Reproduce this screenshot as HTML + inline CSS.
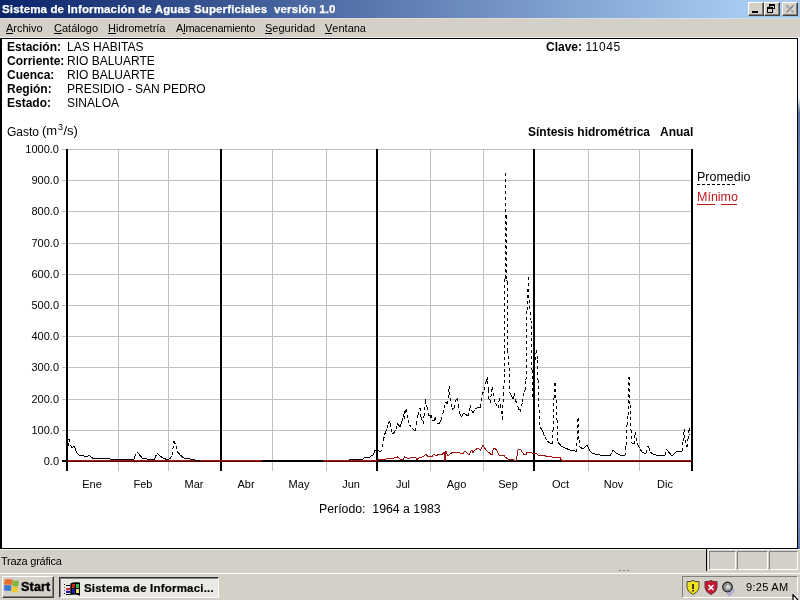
<!DOCTYPE html>
<html><head><meta charset="utf-8">
<style>
*{margin:0;padding:0;box-sizing:border-box}
html{width:800px;height:600px;overflow:hidden;background:#D4D0C8}body{will-change:transform;position:relative;width:800px;height:600px;overflow:hidden;background:#D4D0C8;font-family:"Liberation Sans",sans-serif;font-size:11px;color:#000}
.a{position:absolute;white-space:nowrap}
#title{position:absolute;left:0;top:0;width:800px;height:18px;background:linear-gradient(to right,#0A246A 0px,#A6CAF0 740px,#A6CAF0 800px)}
#title .t{position:absolute;left:2px;top:2px;color:#fff;font-weight:bold;font-size:11.5px;line-height:14px;letter-spacing:0.14px;-webkit-text-stroke:0.25px #fff}
.tb{position:absolute;top:2px;width:16px;height:14px;background:#D4D0C8;border-top:1px solid #fff;border-left:1px solid #fff;border-right:1px solid #404040;border-bottom:1px solid #404040;box-shadow:inset -1px -1px 0 #808080}
#menu{position:absolute;left:0;top:18px;width:800px;height:20px;background:#D4D0C8;border-top:1px solid #DCDCDC;border-bottom:1px solid #F0F0EC}
#menu span{position:absolute;top:3px;line-height:13px}
#menu u{text-decoration:none;position:relative}#menu u::after{content:"";position:absolute;left:0;right:0;top:11px;height:1px;background:#000}
#content{position:absolute;left:0;top:38px;width:798px;height:511px;background:#fff;border-top:1px solid #000;border-left:2px solid #000;border-right:1px solid #000;border-bottom:1px solid #000}
#rightedge{position:absolute;left:798px;top:38px;width:2px;height:511px;background:linear-gradient(#F0F4FA 0px,#F0F4FA 60px,#5878A8 75px,#7090C0 300px,#A0B0C8 420px,#5878A8 510px)}
.hl{position:absolute;font-weight:bold;font-size:12px;line-height:14px;left:7px}
.hv{position:absolute;font-size:12px;line-height:14px;left:67px}
.yl{position:absolute;left:0;width:59px;text-align:right;font-size:11px;line-height:14px}
.ml{position:absolute;top:477px;width:60px;text-align:center;font-size:11px;line-height:14px}
#status{position:absolute;left:0;top:549px;width:800px;height:23px;background:#D4D0C8;box-shadow:inset 0 1px 0 #F4F4F0}
.sp{position:absolute;top:2px;height:19px;border-top:1px solid #808080;border-left:1px solid #808080;border-bottom:1px solid #fff;border-right:1px solid #fff}
#taskbar{position:absolute;left:0;top:572px;width:800px;height:28px;background:#D4D0C8;border-top:1px solid #D4D0C8;box-shadow:inset 0 1px 0 #fff}
.btn{position:absolute;border-top:1px solid #fff;border-left:1px solid #fff;border-right:1px solid #404040;border-bottom:1px solid #404040;box-shadow:inset -1px -1px 0 #808080;background:#D4D0C8}
</style></head><body>
<div id="title"><div class="t">Sistema de Información de Aguas Superficiales&nbsp; versión 1.0</div>
<div class="tb" style="left:748px"><div style="position:absolute;left:3px;top:8px;width:6px;height:2px;background:#000"></div></div>
<div class="tb" style="left:764px"><svg style="position:absolute;left:0;top:0" width="14" height="12" shape-rendering="crispEdges"><rect x="4" y="1" width="6" height="2" fill="#000"/><rect x="9" y="3" width="1" height="3" fill="#000"/><rect x="8" y="5" width="1" height="1" fill="#000"/><rect x="2" y="4" width="6" height="2" fill="#000"/><rect x="2" y="6" width="1" height="4" fill="#000"/><rect x="7" y="6" width="1" height="4" fill="#000"/><rect x="2" y="9" width="6" height="1" fill="#000"/><rect x="4" y="3" width="1" height="1" fill="#000"/></svg></div>
<div class="tb" style="left:782px"><svg style="position:absolute;left:0;top:0" width="14" height="12"><path d="M3.5 2.5 L10.5 9.5 M10.5 2.5 L3.5 9.5" stroke="#808080" stroke-width="1.4"/><path d="M4.5 3.5 L11.5 10.5 M11.5 3.5 L4.5 10.5" stroke="#fff" stroke-width="0.6" opacity="0.6"/></svg></div>
</div>
<div id="menu">
<span style="left:6px"><u>A</u>rchivo</span>
<span style="left:54px"><u>C</u>atálogo</span>
<span style="left:108px"><u>H</u>idrometría</span>
<span style="left:176px;letter-spacing:-0.2px">A<u>l</u>macenamiento</span>
<span style="left:265px"><u>S</u>eguridad</span>
<span style="left:325px"><u>V</u>entana</span>
</div>
<div id="content"></div>
<div id="rightedge"></div>
<div class="hl" style="top:40px">Estación:</div><div class="hv" style="top:40px">LAS HABITAS</div>
<div class="hl" style="top:54px">Corriente:</div><div class="hv" style="top:54px">RIO BALUARTE</div>
<div class="hl" style="top:68px">Cuenca:</div><div class="hv" style="top:68px">RIO BALUARTE</div>
<div class="hl" style="top:82px">Región:</div><div class="hv" style="top:82px">PRESIDIO - SAN PEDRO</div>
<div class="hl" style="top:96px">Estado:</div><div class="hv" style="top:96px">SINALOA</div>
<div class="a" style="left:546px;top:40px;font-size:12px;line-height:14px"><b>Clave:</b> <span style="letter-spacing:0.6px">11045</span></div>
<div class="a" style="left:7px;top:125px;font-size:12px;line-height:14px">Gasto</div><div class="a" style="left:42px;top:124px;font-size:13px;line-height:14px">(m</div><div class="a" style="left:58px;top:121.5px;font-size:9px;line-height:10px">3</div><div class="a" style="left:63.5px;top:124px;font-size:13px;line-height:14px">/s)</div>
<div class="a" style="left:528px;top:125px;font-size:12px;line-height:14px;font-weight:bold">Síntesis hidrométrica&nbsp;&nbsp;&nbsp;Anual</div>
<svg class="a" style="left:0;top:0" width="800" height="600" viewBox="0 0 800 600" shape-rendering="crispEdges">
<rect x="62" y="149" width="629" height="1" fill="#C0C0C0"/>
<rect x="62" y="180" width="629" height="1" fill="#C0C0C0"/>
<rect x="62" y="211" width="629" height="1" fill="#C0C0C0"/>
<rect x="62" y="243" width="629" height="1" fill="#C0C0C0"/>
<rect x="62" y="274" width="629" height="1" fill="#C0C0C0"/>
<rect x="62" y="305" width="629" height="1" fill="#C0C0C0"/>
<rect x="62" y="336" width="629" height="1" fill="#C0C0C0"/>
<rect x="62" y="367" width="629" height="1" fill="#C0C0C0"/>
<rect x="62" y="399" width="629" height="1" fill="#C0C0C0"/>
<rect x="62" y="430" width="629" height="1" fill="#C0C0C0"/>
<rect x="118" y="149" width="1" height="322" fill="#C0C0C0"/>
<rect x="168" y="149" width="1" height="322" fill="#C0C0C0"/>
<rect x="272" y="149" width="1" height="322" fill="#C0C0C0"/>
<rect x="326" y="149" width="1" height="322" fill="#C0C0C0"/>
<rect x="430" y="149" width="1" height="322" fill="#C0C0C0"/>
<rect x="483" y="149" width="1" height="322" fill="#C0C0C0"/>
<rect x="588" y="149" width="1" height="322" fill="#C0C0C0"/>
<rect x="639" y="149" width="1" height="322" fill="#C0C0C0"/>
<rect x="66" y="149" width="2" height="322" fill="#000"/>
<rect x="220" y="149" width="2" height="322" fill="#000"/>
<rect x="376" y="149" width="2" height="322" fill="#000"/>
<rect x="533" y="149" width="2" height="322" fill="#000"/>
<rect x="691" y="149" width="2" height="322" fill="#000"/>
<rect x="62" y="460" width="631" height="2" fill="#000"/>
<rect x="67" y="460" width="195" height="1" fill="#A01818"/><rect x="67" y="461" width="195" height="1" fill="#5A0000"/>
<rect x="323" y="460" width="54" height="1" fill="#A01818"/><rect x="323" y="461" width="54" height="1" fill="#5A0000"/>
<rect x="561" y="460" width="131" height="1" fill="#A01818"/><rect x="561" y="461" width="131" height="1" fill="#5A0000"/>
<polyline points="377,460.5 378,460 381,459 384,460 387,458.5 392,458.5 394,458 397.5,457 401,459.5 403,460 404.5,456.5 407,458 409,459 411,457 415,457 417,459.5 420,457 422,457 424,456 426,454.5 428,456.5 430,457 432,456.5 433.5,454.5 436,455.5 439,454.5 442.5,454.5 444,452 445,461 446,451 447.5,455 449,455 451.5,453 455,452 457,453 458,452 460,453 463.5,453 465,451 467,453 469,455 471,451 472,450.5 473,452.5 475,450 478,448 480.5,450 482,447 483,445.5 484.5,448 487,451 490,453.5 492,455 493.5,448 495,448 497,451 499,455 504,455 505,457 508,459 510,460 512,459.5 514,460 516.5,460.5 517,456 518,450 519,449 520.5,449.5 522,452 524,454.5 526,455 527,452 529,452 532,453 537,454 538,455 545,455.5 546,456.5 552,457 553,457.5 560,457.5 561.5,460.5" fill="none" stroke="#A01010" stroke-width="1" shape-rendering="crispEdges"/>
<path d="M68.00 446.00L69.00 439.00M69.00 439.00L70.00 445.00M70.00 445.00L71.00 446.00M71.00 446.00L72.00 448.00M72.00 448.00L73.00 447.00M73.00 447.00L74.00 446.00M74.00 446.00L75.00 448.00M75.00 448.00L76.00 451.00M76.00 451.00L77.00 453.00M77.00 453.00L79.00 455.00M79.00 455.00L81.00 456.00M81.00 456.00L82.00 455.00M82.00 455.00L84.00 456.00M84.00 456.00L86.00 456.00M86.00 456.00L88.00 456.00M88.00 456.00L89.00 455.00M89.00 455.00L91.00 457.00M91.00 457.00L93.00 458.50M93.00 458.50L94.75 458.50M94.75 458.50L96.50 458.50M96.50 458.50L98.25 458.50M98.25 458.50L100.00 458.50M100.00 458.50L101.67 458.58M101.67 458.58L103.33 458.67M103.33 458.67L105.00 458.75M105.00 458.75L106.67 458.83M106.67 458.83L108.33 458.92M108.33 458.92L110.00 459.00M110.00 459.00L111.60 459.10M111.60 459.10L113.20 459.20M113.20 459.20L114.80 459.30M114.80 459.30L116.40 459.40M116.40 459.40L118.00 459.50M118.00 459.50L119.78 459.50M119.78 459.50L121.56 459.50M121.56 459.50L123.33 459.50M123.33 459.50L125.11 459.50M125.11 459.50L126.89 459.50M126.89 459.50L128.67 459.50M128.67 459.50L130.44 459.50M130.44 459.50L132.22 459.50M132.22 459.50L134.00 459.50M134.00 459.50L134.50 457.00M134.50 457.00L137.00 452.00M137.00 452.00L139.00 454.00M139.00 454.00L140.50 456.00M140.50 456.00L142.00 458.00M142.00 458.00L143.67 458.33M143.67 458.33L145.33 458.67M145.33 458.67L147.00 459.00M147.00 459.00L148.75 459.12M148.75 459.12L150.50 459.25M150.50 459.25L152.25 459.38M152.25 459.38L154.00 459.50M154.00 459.50L155.00 458.00M155.00 458.00L157.00 453.00M157.00 453.00L158.50 454.50M158.50 454.50L160.00 456.00M160.00 456.00L161.50 457.00M161.50 457.00L163.00 458.00M163.00 458.00L164.67 458.67M164.67 458.67L166.33 459.33M166.33 459.33L168.00 460.00M168.00 460.00L170.00 458.50M170.00 458.50L172.00 455.00M172.00 455.00L174.00 441.00M174.00 441.00L176.00 446.00M176.00 446.00L177.00 451.00M177.00 451.00L178.50 453.00M178.50 453.00L180.00 455.00M180.00 455.00L182.00 456.50M182.00 456.50L184.00 458.00M184.00 458.00L185.50 458.25M185.50 458.25L187.00 458.50M187.00 458.50L188.50 458.75M188.50 458.75L190.00 459.00M190.00 459.00L191.67 459.33M191.67 459.33L193.33 459.67M193.33 459.67L195.00 460.00M195.00 460.00L196.67 460.17M196.67 460.17L198.33 460.33M198.33 460.33L200.00 460.50M349.00 459.50L350.50 459.25M350.50 459.25L352.00 459.00M352.00 459.00L354.00 459.50M354.00 459.50L355.50 459.25M355.50 459.25L357.00 459.00M357.00 459.00L358.50 459.25M358.50 459.25L360.00 459.50M360.00 459.50L361.50 459.25M361.50 459.25L363.00 459.00M363.00 459.00L365.00 457.50M365.00 457.50L367.00 457.00M367.00 457.00L369.00 458.00M369.00 458.00L371.00 456.00M371.00 456.00L373.00 455.00M373.00 455.00L374.00 453.00M374.00 453.00L375.00 450.00M375.00 450.00L377.00 450.00M377.00 450.00L378.00 450.00M378.00 450.00L380.50 452.50M380.50 452.50L382.50 447.00M382.50 447.00L383.50 440.00M383.50 440.00L384.50 435.00M384.50 435.00L385.50 432.00M385.50 432.00L387.00 428.00M387.00 428.00L388.00 424.00M388.00 424.00L389.50 421.50M389.50 421.50L390.50 424.00M390.50 424.00L391.50 429.00M391.50 429.00L392.50 434.00M392.50 434.00L394.00 432.50M394.00 432.50L396.00 429.00M396.00 429.00L397.00 423.00M397.00 423.00L398.50 425.00M398.50 425.00L400.00 427.00M400.00 427.00L401.00 424.00M401.00 424.00L402.00 421.00M402.00 421.00L403.00 417.00M403.00 417.00L404.00 411.00M404.00 411.00L404.50 419.00M404.50 419.00L406.00 409.00M406.00 409.00L407.50 415.00M407.50 415.00L408.50 420.00M408.50 420.00L409.50 425.00M409.50 425.00L412.00 428.00M412.00 428.00L413.50 429.50M413.50 429.50L415.00 431.00M415.00 431.00L416.50 424.00M416.50 424.00L418.00 415.00M418.00 415.00L420.00 408.00M420.00 408.00L420.50 416.00M420.50 416.00L421.50 418.00M421.50 418.00L423.00 424.00M423.00 424.00L424.00 416.00M424.00 416.00L424.50 410.00M424.50 410.00L425.50 399.50M425.50 399.50L427.00 407.00M427.00 407.00L428.00 413.00M428.00 413.00L430.00 418.00M430.00 418.00L431.00 415.00M431.00 415.00L432.50 420.00M432.50 420.00L434.00 421.00M434.00 421.00L435.00 417.00M435.00 417.00L437.00 423.00M437.00 423.00L439.50 423.00M439.50 423.00L441.00 420.00M441.00 420.00L443.00 413.00M443.00 413.00L444.00 408.00M444.00 408.00L445.50 402.00M445.50 402.00L447.00 404.00M447.00 404.00L448.50 398.00M448.50 398.00L449.00 386.00M449.00 386.00L450.00 398.00M450.00 398.00L451.00 404.00M451.00 404.00L452.00 410.00M452.00 410.00L453.50 408.00M453.50 408.00L454.00 408.00M454.00 408.00L455.00 402.00M455.00 402.00L457.00 398.00M457.00 398.00L458.50 405.00M458.50 405.00L459.50 413.00M459.50 413.00L461.50 417.00M461.50 417.00L463.50 413.00M463.50 413.00L465.00 414.00M465.00 414.00L466.50 415.00M466.50 415.00L468.00 416.00M468.00 416.00L469.00 411.00M469.00 411.00L470.00 405.00M470.00 405.00L471.00 410.00M471.00 410.00L473.50 413.00M473.50 413.00L475.00 408.00M475.00 408.00L477.00 408.00M477.00 408.00L478.75 407.50M478.75 407.50L480.50 407.00M480.50 407.00L481.00 401.00M481.00 401.00L482.00 395.00M482.00 395.00L484.00 390.00M484.00 390.00L486.00 382.00M486.00 382.00L487.00 377.00M487.00 377.00L487.50 381.00M487.50 381.00L488.50 390.00M488.50 390.00L488.50 397.00M488.50 397.00L490.00 403.00M490.00 403.00L491.50 392.00M491.50 392.00L492.50 387.00M492.50 387.00L493.00 393.00M493.00 393.00L494.00 399.00M494.00 399.00L495.50 403.00M495.50 403.00L498.00 408.00M498.00 408.00L499.50 398.00M499.50 398.00L500.50 405.00M500.50 405.00L501.00 411.00M501.00 411.00L502.00 416.00M502.00 416.00L502.50 420.00M502.50 420.00L503.00 402.00M503.00 402.00L503.50 395.00M503.50 395.00L504.50 372.00M504.50 372.00L504.50 280.00M504.50 280.00L505.50 278.00M505.50 278.00L505.50 173.00M505.50 173.00L505.50 215.00M505.50 215.00L506.50 216.00M506.50 216.00L506.50 280.00M506.50 280.00L507.50 282.00M507.50 282.00L507.50 350.00M507.50 350.00L509.00 368.00M509.00 368.00L510.00 393.00M510.00 393.00L511.50 396.00M511.50 396.00L513.00 399.00M513.00 399.00L514.00 393.00M514.00 393.00L515.50 400.00M515.50 400.00L518.00 407.00M518.00 407.00L520.00 412.00M520.00 412.00L522.50 402.00M522.50 402.00L524.00 392.00M524.00 392.00L525.00 390.00M525.00 390.00L526.00 380.00M526.00 380.00L527.00 310.00M527.00 310.00L528.50 277.50M528.50 277.50L529.00 300.00M529.00 300.00L531.00 320.00M531.00 320.00L532.00 370.00M532.00 370.00L533.00 400.00M533.00 400.00L533.50 405.00M533.50 405.00L535.00 360.00M535.00 360.00L536.50 350.00M536.50 350.00L537.50 360.00M537.50 360.00L538.00 380.00M538.00 380.00L539.00 410.00M539.00 410.00L540.00 427.00M540.00 427.00L542.00 430.00M542.00 430.00L543.50 433.50M543.50 433.50L545.00 437.00M545.00 437.00L547.00 441.00M547.00 441.00L548.50 442.00M548.50 442.00L550.00 443.00M550.00 443.00L552.00 444.00M552.00 444.00L553.00 430.00M553.00 430.00L554.00 398.00M554.00 398.00L555.00 383.00M555.00 383.00L556.00 400.00M556.00 400.00L557.00 420.00M557.00 420.00L558.00 442.00M558.00 442.00L559.50 444.00M559.50 444.00L561.00 446.00M561.00 446.00L563.00 447.00M563.00 447.00L565.00 448.00M565.00 448.00L566.67 448.67M566.67 448.67L568.33 449.33M568.33 449.33L570.00 450.00M570.00 450.00L571.67 450.33M571.67 450.33L573.33 450.67M573.33 450.67L575.00 451.00M575.00 451.00L576.00 452.00M576.00 452.00L577.00 440.00M577.00 440.00L578.00 418.00M578.00 418.00L579.00 440.00M579.00 440.00L580.00 447.00M580.00 447.00L581.50 448.00M581.50 448.00L583.00 449.00M583.00 449.00L585.00 447.00M585.00 447.00L587.00 445.00M587.00 445.00L588.50 448.00M588.50 448.00L590.00 451.00M590.00 451.00L592.00 453.00M592.00 453.00L593.50 453.50M593.50 453.50L595.00 454.00M595.00 454.00L596.67 454.33M596.67 454.33L598.33 454.67M598.33 454.67L600.00 455.00M600.00 455.00L601.67 455.08M601.67 455.08L603.33 455.17M603.33 455.17L605.00 455.25M605.00 455.25L606.67 455.33M606.67 455.33L608.33 455.42M608.33 455.42L610.00 455.50M610.00 455.50L612.00 452.00M612.00 452.00L613.00 450.00M613.00 450.00L614.50 451.50M614.50 451.50L616.00 453.00M616.00 453.00L618.00 454.00M618.00 454.00L620.00 455.00M620.00 455.00L621.67 455.17M621.67 455.17L623.33 455.33M623.33 455.33L625.00 455.50M625.00 455.50L626.00 445.00M626.00 445.00L627.00 425.00M627.00 425.00L628.00 415.00M628.00 415.00L629.00 377.00M629.00 377.00L630.00 405.00M630.00 405.00L631.00 430.00M631.00 430.00L632.00 443.00M632.00 443.00L634.00 444.00M634.00 444.00L635.00 432.00M635.00 432.00L636.00 438.00M636.00 438.00L637.00 443.00M637.00 443.00L638.00 445.00M638.00 445.00L640.00 449.00M640.00 449.00L642.00 452.00M642.00 452.00L644.00 453.00M644.00 453.00L646.00 453.00M646.00 453.00L647.00 447.00M647.00 447.00L648.00 446.00M648.00 446.00L649.00 448.00M649.00 448.00L650.00 452.00M650.00 452.00L651.50 453.00M651.50 453.00L653.00 454.00M653.00 454.00L654.50 454.50M654.50 454.50L656.00 455.00M656.00 455.00L658.00 455.00M658.00 455.00L660.00 455.00M660.00 455.00L661.67 455.00M661.67 455.00L663.33 455.00M663.33 455.00L665.00 455.00M665.00 455.00L666.00 449.00M666.00 449.00L668.00 451.00M668.00 451.00L669.50 453.00M669.50 453.00L671.00 455.00M671.00 455.00L673.00 455.00M673.00 455.00L674.50 453.50M674.50 453.50L676.00 452.00M676.00 452.00L678.00 451.00M678.00 451.00L680.00 452.00M680.00 452.00L682.00 451.00M682.00 451.00L683.00 441.00M683.00 441.00L684.00 429.00M684.00 429.00L685.00 440.00M685.00 440.00L686.00 445.00M686.00 445.00L687.00 447.00M687.00 447.00L688.00 439.00M688.00 439.00L689.00 428.00M689.00 428.00L690.00 435.00" fill="none" stroke="#000" stroke-width="1" stroke-dasharray="3 3" shape-rendering="crispEdges"/>
</svg>
<div class="yl" style="top:142px">1000.0</div>
<div class="yl" style="top:173px">900.0</div>
<div class="yl" style="top:204px">800.0</div>
<div class="yl" style="top:236px">700.0</div>
<div class="yl" style="top:267px">600.0</div>
<div class="yl" style="top:298px">500.0</div>
<div class="yl" style="top:329px">400.0</div>
<div class="yl" style="top:360px">300.0</div>
<div class="yl" style="top:392px">200.0</div>
<div class="yl" style="top:423px">100.0</div>
<div class="yl" style="top:454px">0.0</div>
<div class="ml" style="left:62.0px">Ene</div>
<div class="ml" style="left:113.0px">Feb</div>
<div class="ml" style="left:164.0px">Mar</div>
<div class="ml" style="left:216.0px">Abr</div>
<div class="ml" style="left:269.0px">May</div>
<div class="ml" style="left:321.0px">Jun</div>
<div class="ml" style="left:373.0px">Jul</div>
<div class="ml" style="left:426.5px">Ago</div>
<div class="ml" style="left:478.0px">Sep</div>
<div class="ml" style="left:530.5px">Oct</div>
<div class="ml" style="left:583.5px">Nov</div>
<div class="ml" style="left:635.0px">Dic</div>
<div class="a" style="left:697px;top:170px;font-size:12.5px;line-height:14px">Promedio</div>
<svg class="a" style="left:697px;top:184px" width="40" height="1"><line x1="0" y1="0.5" x2="40" y2="0.5" stroke="#000" stroke-dasharray="3 2"/></svg>
<div class="a" style="left:697px;top:190px;font-size:12.5px;line-height:14px;color:#C01818">Mínimo</div>
<svg class="a" style="left:697px;top:204px" width="40" height="1"><line x1="0" y1="0.5" x2="18" y2="0.5" stroke="#C01818"/><line x1="24" y1="0.5" x2="40" y2="0.5" stroke="#C01818"/></svg>
<div class="a" style="left:319px;top:502px;font-size:12.3px;line-height:14px">Período:&nbsp; 1964 a 1983</div>
<div id="status"><span class="a" style="left:1px;top:5px;font-size:11px;line-height:14px;letter-spacing:-0.25px">Traza gráfica</span>
<div style="position:absolute;left:706px;top:-1px;width:1px;height:23px;background:#000"></div><div style="position:absolute;left:708px;top:1px;width:1px;height:21px;background:#F4F4F0"></div>
<div class="sp" style="left:709px;width:27px"></div>
<div class="sp" style="left:737px;width:31px"></div>
<div class="sp" style="left:769px;width:29px"></div>
</div>
<div id="taskbar">
<div class="btn" style="left:2px;top:3px;width:52px;height:22px">
<svg style="position:absolute;left:1px;top:2px" width="16" height="15"><path d="M1 0 L9 0.5 L8 6 L0 5.5Z" fill="#E8702A"/><path d="M9.5 1.5 L15 2 L14 7.5 L8.5 7Z" fill="#78B838"/><path d="M0.5 6 L7.5 6.5 L7 12 L0 11.5Z" fill="#3C78D8"/><path d="M8 7.5 L14 8 L13.5 13.5 L7.5 13Z" fill="#F0C828"/></svg>
<span class="a" style="left:18px;top:3px;font-weight:bold;font-size:12.5px;line-height:14px;letter-spacing:0.2px;-webkit-text-stroke:0.4px #000">Start</span></div>
<div style="position:absolute;left:59px;top:4px;width:160px;height:21px;background:#EAE8E4;border-top:1px solid #303030;border-left:1px solid #303030;border-right:1px solid #fff;border-bottom:1px solid #fff;box-shadow:inset 1px 1px 0 #808080">
<svg style="position:absolute;left:4px;top:2px" width="18" height="17" shape-rendering="crispEdges"><rect x="0" y="4" width="1" height="1" fill="#000"/><rect x="0" y="7" width="1" height="1" fill="#A04040"/><rect x="0" y="10" width="1" height="1" fill="#303090"/><rect x="0" y="13" width="1" height="1" fill="#000"/><rect x="2" y="5" width="4" height="1" fill="#000"/><rect x="2" y="8" width="4" height="2" fill="#C03040"/><rect x="2" y="10" width="4" height="1" fill="#F0A0C0"/><rect x="2" y="11" width="4" height="2" fill="#2020C0"/><rect x="2" y="14" width="4" height="1" fill="#000"/><path d="M6.3 3.5 Q10 1.5 16 2.5 L16 15.7 Q11 13.5 6.3 15Z" fill="#000" shape-rendering="auto"/><rect x="8" y="4" width="3" height="4" fill="#D02020"/><rect x="12" y="4" width="3" height="4" fill="#30C040"/><rect x="8" y="9" width="3" height="4" fill="#2020B0"/><rect x="12" y="9" width="3" height="4" fill="#F0E060"/></svg>
<span class="a" style="left:24px;top:3px;font-weight:bold;font-size:11.5px;line-height:14px;letter-spacing:0.2px;-webkit-text-stroke:0.2px #000">Sistema de Informaci...</span></div>
<div style="position:absolute;left:682px;top:3px;width:116px;height:22px;border-top:1px solid #808080;border-left:1px solid #808080;border-right:1px solid #fff;border-bottom:1px solid #fff">
<svg style="position:absolute;left:3px;top:2px" width="56" height="17">
<path d="M7 1.5 Q10 3.2 13 2.5 L13 8.5 Q13 12.5 7 15.5 Q1 12.5 1 8.5 L1 2.5 Q4 3.2 7 1.5Z" fill="#F0E020" stroke="#505030" stroke-width="1"/><rect x="6.3" y="5" width="1.5" height="5" fill="#000"/><rect x="6.3" y="11" width="1.5" height="1.5" fill="#000"/>
<path d="M25 1.5 Q28 3.2 31 2.5 L31 8.5 Q31 12.5 25 15.5 Q19 12.5 19 8.5 L19 2.5 Q22 3.2 25 1.5Z" fill="#C81830" stroke="#603038" stroke-width="1"/><path d="M22.5 6 L27.5 11 M27.5 6 L22.5 11" stroke="#fff" stroke-width="1.7"/>
<circle cx="41.5" cy="8" r="4.8" fill="#909090" stroke="#202020" stroke-width="1.2"/><circle cx="42" cy="8" r="2.2" fill="#D0D0D0"/><path d="M46 11 Q45 14 41 15 M48 10 Q47 15.5 42 16.5" stroke="#8888E0" fill="none" stroke-width="1"/>
</svg>
<span class="a" style="left:63px;top:3px;font-size:11px;line-height:14px;letter-spacing:0.3px">9:25 AM</span>
</div>
</div>
<svg class="a" style="left:792px;top:594px" width="8" height="6"><path d="M1 0 L1 6 M1 1 L6 6" stroke="#000" stroke-width="1.2" fill="none"/><path d="M2 2.5 L2 6 L4.5 6Z" fill="#fff"/></svg>
<svg class="a" style="left:619px;top:570px" width="12" height="2" shape-rendering="crispEdges"><rect x="0" y="0" width="2" height="1" fill="#808080"/><rect x="4" y="0" width="2" height="1" fill="#808080"/><rect x="8" y="0" width="2" height="1" fill="#808080"/></svg>
</body></html>
